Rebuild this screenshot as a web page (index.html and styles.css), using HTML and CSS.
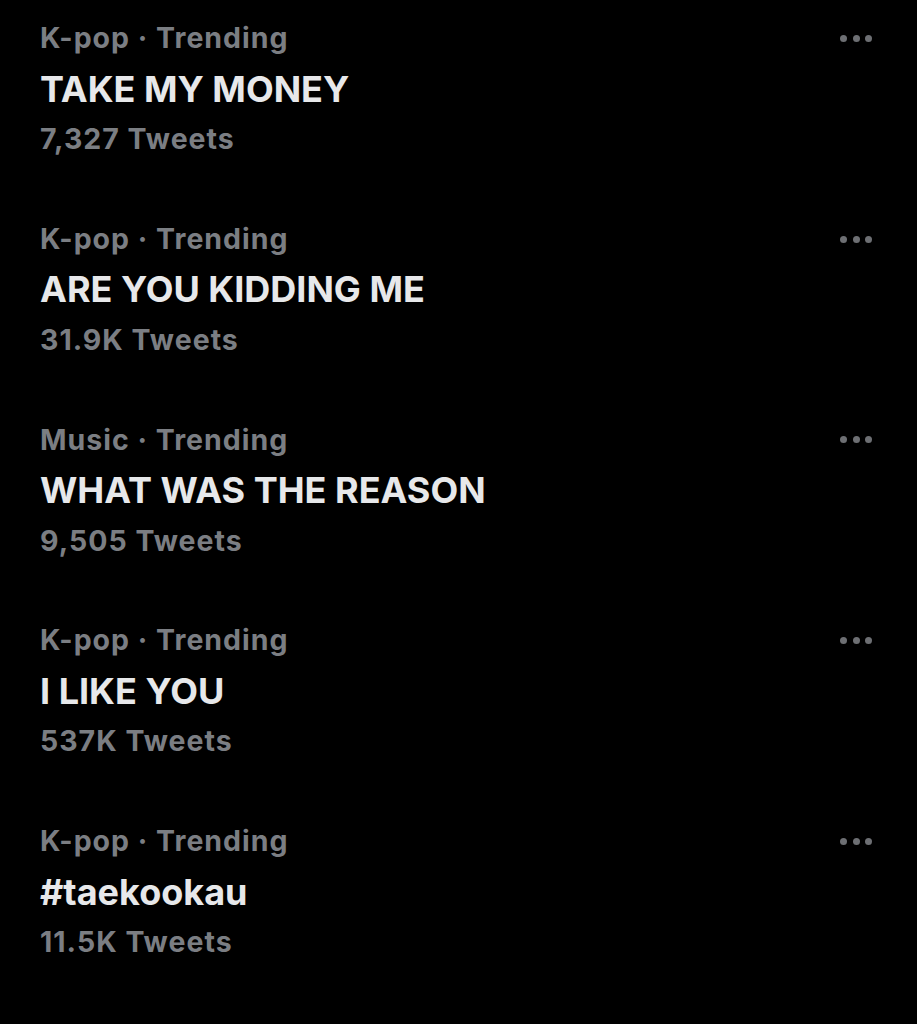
FILE: index.html
```html
<!DOCTYPE html>
<html>
<head>
<meta charset="utf-8">
<link rel="stylesheet" href="styles.css">
</head>
<body>
<div class="list">
  <div class="trend">
    <div class="text">
      <div class="meta">K-pop · Trending</div>
      <div class="title">TAKE MY MONEY</div>
      <div class="meta">7,327 Tweets</div>
    </div>
    <div class="more"><span></span><span></span><span></span></div>
  </div>
  <div class="trend">
    <div class="text">
      <div class="meta">K-pop · Trending</div>
      <div class="title">ARE YOU KIDDING ME</div>
      <div class="meta">31.9K Tweets</div>
    </div>
    <div class="more"><span></span><span></span><span></span></div>
  </div>
  <div class="trend">
    <div class="text">
      <div class="meta">Music · Trending</div>
      <div class="title">WHAT WAS THE REASON</div>
      <div class="meta">9,505 Tweets</div>
    </div>
    <div class="more"><span></span><span></span><span></span></div>
  </div>
  <div class="trend">
    <div class="text">
      <div class="meta">K-pop · Trending</div>
      <div class="title">I LIKE YOU</div>
      <div class="meta">537K Tweets</div>
    </div>
    <div class="more"><span></span><span></span><span></span></div>
  </div>
  <div class="trend">
    <div class="text">
      <div class="meta">K-pop · Trending</div>
      <div class="title">#taekookau</div>
      <div class="meta">11.5K Tweets</div>
    </div>
    <div class="more"><span></span><span></span><span></span></div>
  </div>
</div>
</body>
</html>
```

FILE: styles.css
```css
html, body {
  margin: 0;
  padding: 0;
  background: #000;
}
body {
  width: 917px;
  height: 1024px;
  overflow: hidden;
  font-family: Inter, "Liberation Sans", sans-serif;
  font-weight: 700;
}
.list {
  display: flex;
  flex-direction: column;
  padding: 13px 0 0 40px;
}
.trend {
  display: flex;
  justify-content: space-between;
  align-items: flex-start;
  height: 200.75px;
  padding-right: 45px;
}
.text {
  display: flex;
  flex-direction: column;
}
.meta, .title {
  height: 50.5px;
  line-height: 50.5px;
  white-space: nowrap;
}
.meta {
  color: #7b7e83;
  font-size: 28.5px;
  font-weight: 700;
  letter-spacing: 1px;
}
.title {
  color: #e7e8ea;
  font-size: 36px;
  letter-spacing: 0;
}
.more {
  display: flex;
  gap: 5.5px;
  height: 50.5px;
  align-items: center;
}
.more span {
  width: 7px;
  height: 7px;
  border-radius: 50%;
  background: #6d6f73;
}
```
